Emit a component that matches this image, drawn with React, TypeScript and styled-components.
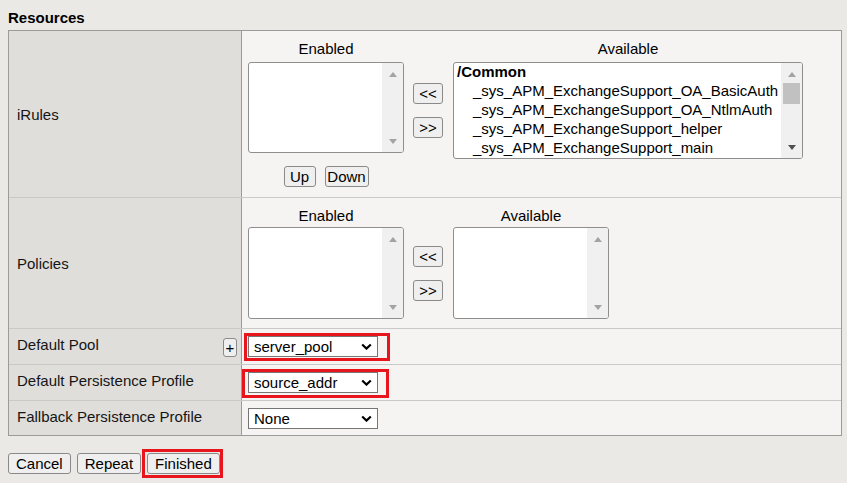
import React from 'react';
import styled, { createGlobalStyle } from 'styled-components';

const Global = createGlobalStyle`
  html, body { margin: 0; padding: 0; background: #ebe9e6; }
  body {
    font-family: "Liberation Sans", Arial, sans-serif;
    font-size: 15px;
    color: #111;
    width: 847px;
    height: 483px;
    overflow: hidden;
  }
  #root { width: 847px; }
`;

const Page = styled.div`
  padding: 0 5px 0 8px;
`;

const Title = styled.h2`
  margin: 0;
  padding-top: 9px;
  font-size: 15px;
  line-height: 17px;
  font-weight: bold;
  color: #000;
`;

const Table = styled.div`
  margin-top: 4px;
  width: 834px;
  box-sizing: border-box;
  border: 1px solid #9b9b9b;
  display: flex;
  flex-direction: column;
`;

const Row = styled.div<{ $h?: number }>`
  display: grid;
  grid-template-columns: 233px 1fr;
  ${(p) => (p.$h ? `height: ${p.$h}px;` : '')}
  & + & {
    border-top: 1px solid #c9c9c9;
  }
`;

const LabelCell = styled.div<{ $top?: boolean }>`
  background: #dfdedb;
  border-right: 1px solid #9b9b9b;
  display: flex;
  justify-content: space-between;
  align-items: ${(p) => (p.$top ? 'flex-start' : 'center')};
  padding: ${(p) => (p.$top ? '7px 4px 0 8px' : '0 4px 0 8px')};
  line-height: 17px;
  color: #151515;
`;

const ValueCell = styled.div<{ $pad?: string }>`
  background: #f5f4f2;
  padding: ${(p) => p.$pad ?? '0 6px'};
  display: flex;
  align-items: center;
`;

const Btn = styled.button<{ $w?: number }>`
  box-sizing: border-box;
  height: 21px;
  ${(p) => (p.$w ? `width: ${p.$w}px; padding: 0;` : 'padding: 0 7px;')}
  font-family: "Liberation Sans", Arial, sans-serif;
  font-size: 15px;
  line-height: 19px;
  color: #000;
  background: #efefef;
  border: 1px solid #8a8a8a;
  border-radius: 3px;
  cursor: pointer;
`;

const PlusBtn = styled.button`
  align-self: center;
  box-sizing: border-box;
  width: 14px;
  height: 19px;
  margin-top: -5px;
  padding: 0;
  font-family: "Liberation Sans", Arial, sans-serif;
  font-size: 15px;
  line-height: 16px;
  color: #000;
  background: #efefef;
  border: 1px solid #8a8a8a;
  border-radius: 3px;
`;

const Dual = styled.div`
  display: grid;
  grid-template-columns: 156px 49px auto;
  align-items: start;
`;

const ColHead = styled.div<{ $gap: number }>`
  text-align: center;
  line-height: 17px;
  color: #000;
  margin-bottom: ${(p) => p.$gap}px;
`;

const Movers = styled.div`
  align-self: center;
  margin-left: 9px;
  display: flex;
  flex-direction: column;
  gap: 13px;
`;

const UpDown = styled.div`
  grid-column: 1;
  margin-top: 7px;
  display: flex;
  justify-content: center;
  gap: 9px;
`;

const ListBox = styled.div<{ $w: number; $h: number }>`
  box-sizing: border-box;
  width: ${(p) => p.$w}px;
  height: ${(p) => p.$h}px;
  border: 1px solid #8e8e8e;
  border-radius: 3px;
  background: #fff;
  display: flex;
  overflow: hidden;
`;

const Items = styled.div`
  flex: 1;
  min-width: 0;
  padding-left: 3px;
`;

const Opt = styled.div<{ $group?: boolean }>`
  height: ${(p) => (p.$group ? 18 : 19)}px;
  line-height: ${(p) => (p.$group ? 18 : 19)}px;
  white-space: nowrap;
  font-weight: ${(p) => (p.$group ? 'bold' : 'normal')};
  padding-left: ${(p) => (p.$group ? 0 : 16)}px;
  color: #000;
`;

const Track = styled.div`
  width: 21px;
  flex: none;
  background: #f0f0f0;
  display: flex;
  flex-direction: column;
`;

const ArrowBox = styled.div<{ $dir: 'up' | 'down' }>`
  box-sizing: border-box;
  height: 20px;
  display: flex;
  justify-content: center;
  align-items: center;
  ${(p) => (p.$dir === 'up' ? 'padding-top: 2px;' : 'padding-bottom: 2px;')}
`;

const Tri = styled.span<{ $dir: 'up' | 'down'; $on?: boolean }>`
  width: 0;
  height: 0;
  border-left: 4px solid transparent;
  border-right: 4px solid transparent;
  border-bottom: ${(p) => (p.$dir === 'up' ? `5px solid ${p.$on ? '#505050' : '#a3a3a3'}` : '0')};
  border-top: ${(p) => (p.$dir === 'down' ? `5px solid ${p.$on ? '#505050' : '#a3a3a3'}` : '0')};
`;

const Thumb = styled.div`
  height: 21px;
  margin: 0 2px;
  background: #c1c1c1;
`;

const Spacer = styled.div`
  flex: 1;
`;

const Highlight = styled.span<{ $inset: string }>`
  position: relative;
  display: inline-flex;
  &::after {
    content: '';
    position: absolute;
    inset: ${(p) => p.$inset};
    border: 3px solid #e8151d;
    pointer-events: none;
  }
`;

const SelectWrap = styled.span`
  position: relative;
  display: inline-flex;
  width: 130px;
  height: 21px;
`;

const Select = styled.select`
  appearance: none;
  -webkit-appearance: none;
  box-sizing: border-box;
  width: 130px;
  height: 21px;
  margin: 0;
  padding: 0 20px 0 5px;
  border: 1px solid #767676;
  border-radius: 0;
  background: #fff;
  font-family: "Liberation Sans", Arial, sans-serif;
  font-size: 15px;
  color: #000;
  outline: none;
`;

const Chevron = styled.svg`
  position: absolute;
  right: 6px;
  top: 7px;
  pointer-events: none;
`;

const Footer = styled.div`
  margin-top: 17px;
  display: flex;
  align-items: center;
  gap: 6px;
`;

type ListProps = {
  w: number;
  h: number;
  items?: string[];
  group?: string;
  scroll?: boolean;
};

function List({ w, h, items = [], group, scroll }: ListProps) {
  return (
    <ListBox $w={w} $h={h}>
      <Items>
        {group && <Opt $group>{group}</Opt>}
        {items.map((it) => (
          <Opt key={it}>{it}</Opt>
        ))}
      </Items>
      <Track>
        <ArrowBox $dir="up">
          <Tri $dir="up" />
        </ArrowBox>
        {scroll && <Thumb />}
        <Spacer />
        <ArrowBox $dir="down">
          <Tri $dir="down" $on={scroll} />
        </ArrowBox>
      </Track>
    </ListBox>
  );
}

function Dropdown({ value }: { value: string }) {
  return (
    <SelectWrap>
      <Select defaultValue={value}>
        <option>{value}</option>
      </Select>
      <Chevron width="11" height="7" viewBox="0 0 11 7">
        <path d="M1.2 1.5 L5.5 5.6 L9.8 1.5" fill="none" stroke="#000" strokeWidth="2.2" />
      </Chevron>
    </SelectWrap>
  );
}

export default function App() {
  return (
    <Page>
      <Global />
      <Title>Resources</Title>
      <Table>
        <Row>
          <LabelCell>iRules</LabelCell>
          <ValueCell $pad="9px 6px 10px">
            <Dual>
              <ColHead $gap={5}>Enabled</ColHead>
              <span />
              <ColHead $gap={5}>Available</ColHead>
              <List w={156} h={91} />
              <Movers>
                <Btn $w={30}>{'<<'}</Btn>
                <Btn $w={30}>{'>>'}</Btn>
              </Movers>
              <List
                w={350}
                h={97}
                scroll
                group="/Common"
                items={[
                  '_sys_APM_ExchangeSupport_OA_BasicAuth',
                  '_sys_APM_ExchangeSupport_OA_NtlmAuth',
                  '_sys_APM_ExchangeSupport_helper',
                  '_sys_APM_ExchangeSupport_main',
                ]}
              />
              <UpDown>
                <Btn $w={32}>Up</Btn>
                <Btn $w={44}>Down</Btn>
              </UpDown>
            </Dual>
          </ValueCell>
        </Row>
        <Row>
          <LabelCell>Policies</LabelCell>
          <ValueCell $pad="9px 6px 9px">
            <Dual>
              <ColHead $gap={3}>Enabled</ColHead>
              <span />
              <ColHead $gap={3}>Available</ColHead>
              <List w={156} h={92} />
              <Movers>
                <Btn $w={30}>{'<<'}</Btn>
                <Btn $w={30}>{'>>'}</Btn>
              </Movers>
              <List w={156} h={92} />
            </Dual>
          </ValueCell>
        </Row>
        <Row $h={35}>
          <LabelCell $top>
            Default Pool
            <PlusBtn>+</PlusBtn>
          </LabelCell>
          <ValueCell>
            <Highlight $inset="-3px -12px -4px -4px">
              <Dropdown value="server_pool" />
            </Highlight>
          </ValueCell>
        </Row>
        <Row $h={35}>
          <LabelCell $top>Default Persistence Profile</LabelCell>
          <ValueCell>
            <Highlight $inset="-3px -11px -5px -6px">
              <Dropdown value="source_addr" />
            </Highlight>
          </ValueCell>
        </Row>
        <Row $h={34}>
          <LabelCell $top>Fallback Persistence Profile</LabelCell>
          <ValueCell>
            <Dropdown value="None" />
          </ValueCell>
        </Row>
      </Table>
      <Footer>
        <Btn>Cancel</Btn>
        <Btn>Repeat</Btn>
        <Highlight $inset="-4px -3px -4px -5px">
          <Btn>Finished</Btn>
        </Highlight>
      </Footer>
    </Page>
  );
}
